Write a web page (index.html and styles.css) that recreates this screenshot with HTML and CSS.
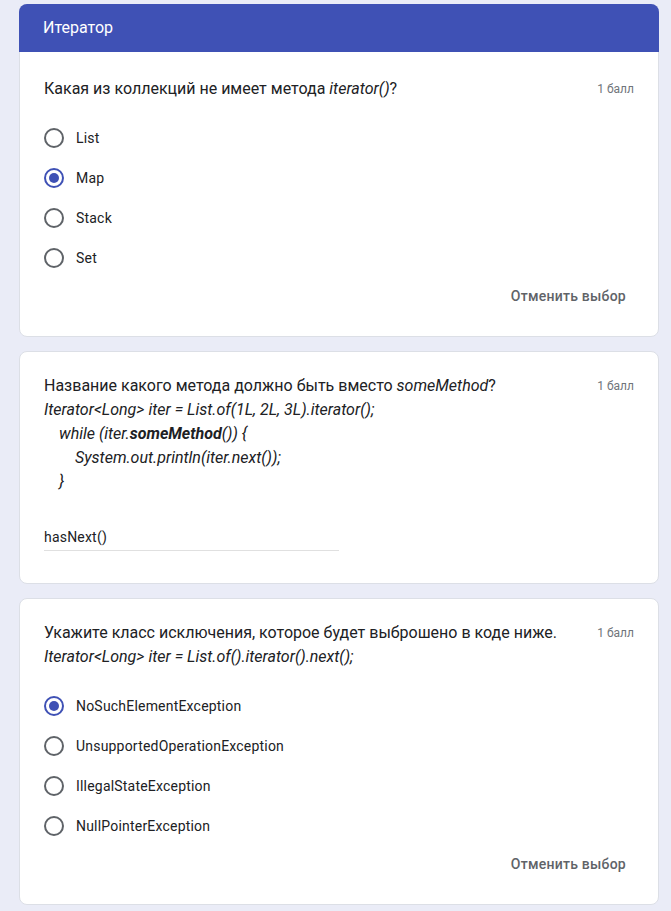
FILE: index.html
```html
<!DOCTYPE html>
<html lang="ru">
<head>
<meta charset="utf-8">
<title>Итератор</title>
<link rel="stylesheet" href="styles.css">
</head>
<body>
<main class="form">
  <section class="card card-first">
    <header class="section-head">Итератор</header>
    <div class="card-body">
      <div class="q-head">
        <div class="q-text">Какая из коллекций не имеет метода <i>iterator()</i>?</div>
        <div class="points">1 балл</div>
      </div>
      <div class="options">
        <label class="option"><span class="radio"></span><span class="opt-label">List</span></label>
        <label class="option"><span class="radio checked"></span><span class="opt-label">Map</span></label>
        <label class="option"><span class="radio"></span><span class="opt-label">Stack</span></label>
        <label class="option"><span class="radio"></span><span class="opt-label">Set</span></label>
      </div>
      <div class="actions"><span class="clear-btn">Отменить выбор</span></div>
    </div>
  </section>

  <section class="card">
    <div class="card-body card-body-text">
      <div class="q-head">
        <div class="q-text">
          <div>Название какого метода должно быть вместо <i>someMethod</i>?</div>
          <div class="code">Iterator&lt;Long&gt; iter = List.of(1L, 2L, 3L).iterator();</div>
          <div class="code indent1">while (iter.<b>someMethod</b>()) {</div>
          <div class="code indent2">System.out.println(iter.next());</div>
          <div class="code indent1">}</div>
        </div>
        <div class="points">1 балл</div>
      </div>
      <div class="answer">hasNext()</div>
    </div>
  </section>

  <section class="card">
    <div class="card-body">
      <div class="q-head">
        <div class="q-text">
          <div>Укажите класс исключения, которое будет выброшено в коде ниже.</div>
          <div class="code">Iterator&lt;Long&gt; iter = List.of().iterator().next();</div>
        </div>
        <div class="points">1 балл</div>
      </div>
      <div class="options">
        <label class="option"><span class="radio checked"></span><span class="opt-label">NoSuchElementException</span></label>
        <label class="option"><span class="radio"></span><span class="opt-label">UnsupportedOperationException</span></label>
        <label class="option"><span class="radio"></span><span class="opt-label">IllegalStateException</span></label>
        <label class="option"><span class="radio"></span><span class="opt-label">NullPointerException</span></label>
      </div>
      <div class="actions"><span class="clear-btn">Отменить выбор</span></div>
    </div>
  </section>
</main>
</body>
</html>
```

FILE: styles.css
```css
* { box-sizing: border-box; }

html, body {
  margin: 0;
  padding: 0;
  background: #eaecf7;
}

body {
  font-family: Roboto, "Noto Sans", Arial, sans-serif;
  color: #202124;
}

.form {
  width: 640px;
  margin-left: 19px;
  padding-top: 4px;
  display: flex;
  flex-direction: column;
  gap: 14px;
}

.card {
  background: #fff;
  border: 1px solid #dcdfe6;
  border-radius: 8px;
}

.section-head {
  margin: -1px -1px 0;
  background: #3f51b5;
  color: #fff;
  border-radius: 8px 8px 0 0;
  font-size: 16px;
  line-height: 24px;
  padding: 12px 24px;
}

.card-body {
  padding: 22px 24px 22px;
}

.card-first .card-body {
  padding-top: 25px;
}

.card-body-text {
  padding-bottom: 32px;
}

.q-head {
  display: flex;
  justify-content: space-between;
  align-items: flex-start;
  gap: 16px;
}

.q-text {
  font-size: 16px;
  line-height: 24px;
  color: #202124;
}

.code {
  font-style: italic;
}

.code b {
  font-weight: 700;
}

.indent1 { padding-left: 15px; }
.indent2 { padding-left: 31px; }

.points {
  flex: none;
  font-size: 12px;
  line-height: 24px;
  color: #70757a;
}

.options {
  margin-top: 17px;
  display: flex;
  flex-direction: column;
}

.option {
  display: flex;
  align-items: center;
  gap: 12px;
  height: 40px;
}

.radio {
  width: 20px;
  height: 20px;
  flex: none;
  border: 2px solid #5f6368;
  border-radius: 50%;
  display: flex;
  align-items: center;
  justify-content: center;
}

.radio.checked {
  border-color: #3f51b5;
}

.radio.checked::after {
  content: "";
  width: 10px;
  height: 10px;
  border-radius: 50%;
  background: #3f51b5;
}

.opt-label {
  font-size: 14px;
  letter-spacing: 0.2px;
  color: #202124;
}

.actions {
  display: flex;
  justify-content: flex-end;
}

.clear-btn {
  height: 36px;
  line-height: 36px;
  padding: 0 8px;
  font-size: 14px;
  font-weight: 500;
  letter-spacing: 0.25px;
  color: #5f6368;
}

.answer {
  margin-top: 23px;
  padding-top: 8px;
  padding-bottom: 1px;
  width: 295px;
  font-size: 14px;
  line-height: 24px;
  letter-spacing: 0.2px;
  color: #202124;
  border-bottom: 1px solid #e0e0e0;
}
```
